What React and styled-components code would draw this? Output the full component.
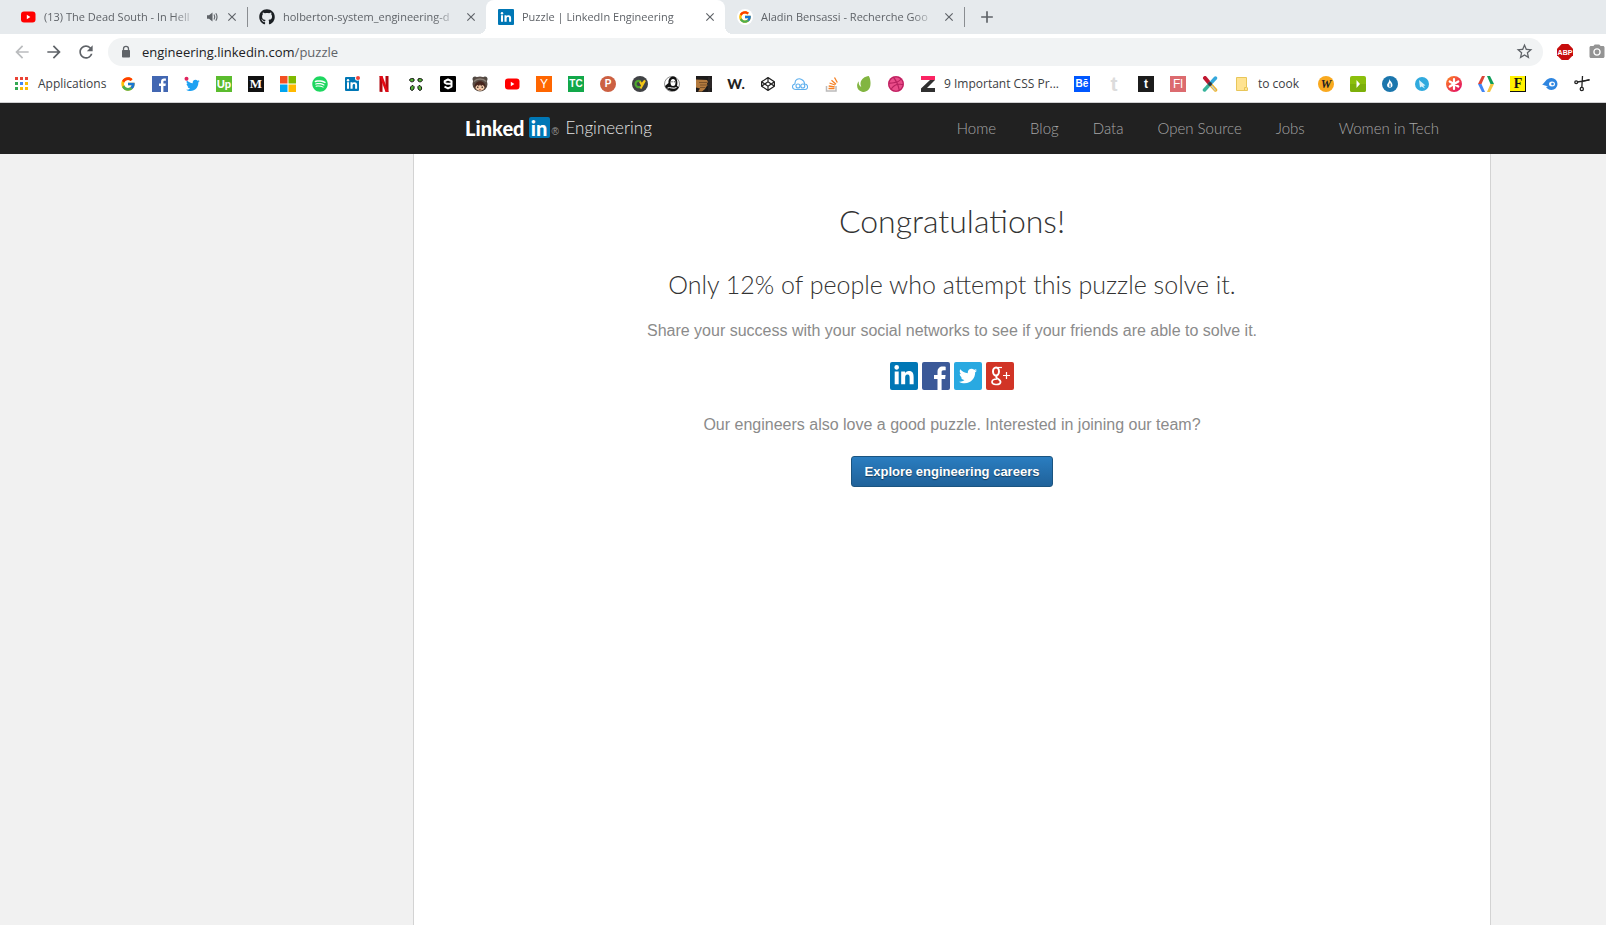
import React from "react";
import styled, { createGlobalStyle, css } from "styled-components";
import { FcGoogle } from "react-icons/fc";
import {
  FaGithub,
  FaSpotify,
  FaDribbble,
  FaCodepen,
  FaTwitter,
  FaLinkedinIn,
} from "react-icons/fa";
import {
  MdArrowBack,
  MdArrowForward,
  MdRefresh,
  MdStarBorder,
  MdCameraAlt,
  MdClose,
  MdAdd,
} from "react-icons/md";

const uiFont = `"Open Sans", "Noto Sans", sans-serif`;
const brandFont = `Lato, "Open Sans", sans-serif`;
const bodyFont = `"Liberation Sans", Arial, sans-serif`;
const serifFont = `"Liberation Serif", serif`;

const GlobalStyle = createGlobalStyle`
  *, *::before, *::after { box-sizing: border-box; }
  body { margin: 0; background: #f1f1f1; font-family: ${bodyFont}; }
  a { color: inherit; text-decoration: none; }
  button { border: 0; padding: 0; background: none; color: inherit; font: inherit; cursor: pointer; }
  svg { display: block; flex: none; }
`;

const Window = styled.div`
  display: flex;
  flex-direction: column;
  min-height: 100vh;
  overflow: hidden;
`;

/* ---------- browser chrome ---------- */

const TabStrip = styled.div`
  display: flex;
  align-items: stretch;
  height: 34px;
  padding-left: 8px;
  background: #e6eaed;
  font: 11px/16px ${uiFont};
  color: #5f6368;
`;

const flare = css`
  content: "";
  position: absolute;
  bottom: 0;
  width: 8px;
  height: 8px;
`;

const Tab = styled.div`
  position: relative;
  display: flex;
  align-items: center;
  flex: 0 1 239px;
  min-width: 0;
  gap: 8px;
  padding: 0 10px 0 12px;
  ${(p) =>
    p.$active &&
    css`
      background: #fff;
      border-radius: 8px 8px 0 0;
      &::before {
        ${flare}
        left: -8px;
        background: radial-gradient(circle at 0 0, transparent 8px, #fff 8px);
      }
      &::after {
        ${flare}
        right: -8px;
        background: radial-gradient(circle at 100% 0, transparent 8px, #fff 8px);
      }
    `}
`;

const TabTitle = styled.span`
  flex: 1;
  min-width: 0;
  overflow: hidden;
  white-space: nowrap;
  mask-image: linear-gradient(to right, #000 calc(100% - 24px), transparent);
`;

const TabClose = styled.button`
  display: flex;
  align-items: center;
  justify-content: center;
  width: 10px;
  height: 16px;
  color: #5f6368;
`;

const TabDivider = styled.span`
  align-self: center;
  width: 1px;
  height: 20px;
  margin-right: -1px;
  background: #8a8d91;
`;

const NewTab = styled.button`
  display: flex;
  align-items: center;
  justify-content: center;
  width: 28px;
  margin-left: 9px;
`;

const Toolbar = styled.div`
  display: flex;
  align-items: center;
  height: 36px;
  padding-left: 12px;
  gap: 12px;
  background: #fff;
  color: #5f6368;
`;

const ToolButton = styled.button`
  display: flex;
  flex: none;
  width: 20px;
  height: 20px;
  color: ${(p) => (p.$muted ? "#babcbe" : "#5f6368")};
`;

const Omnibox = styled.div`
  display: flex;
  align-items: center;
  flex: 1;
  min-width: 0;
  height: 28px;
  padding: 0 8px 0 11px;
  border-radius: 14px;
  background: #f1f3f4;
`;

const Url = styled.div`
  flex: 1;
  min-width: 0;
  margin-left: 9px;
  font: 13px/20px ${uiFont};
  color: #5f6368;
  white-space: nowrap;
  overflow: hidden;
  b {
    font-weight: 400;
    color: #202124;
  }
`;

const Extensions = styled.div`
  display: flex;
  align-items: center;
  flex: none;
  gap: 15px;
  width: 51px;
  padding-left: 2px;
  overflow: hidden;
`;

const BookmarksBar = styled.nav`
  display: flex;
  align-items: center;
  height: 33px;
  padding: 0 0 4px 6px;
  background: #fff;
  border-bottom: 1px solid #d0d0d2;
  overflow: hidden;
`;

const Bookmark = styled.a`
  display: flex;
  align-items: center;
  flex: none;
  gap: 8px;
  width: ${(p) => p.$width || 32}px;
  height: 28px;
  padding: 0 8px;
  font: 12px/16px ${uiFont};
  color: #3c4043;
  white-space: nowrap;
`;

const Badge = styled.span`
  display: flex;
  align-items: center;
  justify-content: center;
  flex: none;
  width: 16px;
  height: 16px;
  border-radius: ${(p) => p.$radius || 0}px;
  background: ${(p) => p.$bg || "transparent"};
  color: ${(p) => p.$fg || "#fff"};
  font: ${(p) => p.$weight || 700} ${(p) => p.$size || 11}px/16px ${(p) => p.$font || bodyFont};
  box-shadow: ${(p) => (p.$edge ? "inset -1px -1px #111" : "none")};
`;

/* ---------- page ---------- */

const columns = css`
  display: grid;
  grid-template-columns: minmax(0, 413fr) minmax(0, 1078px) minmax(0, 115fr);
`;

const SiteHeader = styled.header`
  ${columns}
  height: 51px;
  background: #212121;
`;

const HeaderInner = styled.div`
  grid-column: 2;
  display: flex;
  align-items: center;
  justify-content: space-between;
  padding: 0 52px 2px 52px;
  font-family: ${brandFont};
`;

const Brand = styled.a`
  display: flex;
  align-items: center;
  color: #fff;
  font-size: 20px;
  line-height: 24px;
  font-weight: 900;
`;

const InBox = styled.span`
  display: flex;
  align-items: center;
  justify-content: center;
  width: 21px;
  height: 21px;
  margin-left: 4px;
  border-radius: 2px;
  background: #0077b5;
`;

const Registered = styled.span`
  align-self: flex-end;
  width: 8px;
  margin: 0 6px 0 2px;
  font: 10px/16px ${bodyFont};
  color: #9a9a9a;
`;

const BrandArea = styled.span`
  font-size: 17px;
  font-weight: 300;
  color: #e4e4e4;
`;

const SiteNav = styled.nav`
  display: flex;
  gap: 34px;
  font-size: 15px;
  line-height: 20px;
  font-weight: 300;
  color: #a6a6a6;
  white-space: nowrap;
`;

const PageBody = styled.div`
  ${columns}
  flex: 1;
`;

const Panel = styled.main`
  grid-column: 2;
  display: flex;
  flex-direction: column;
  align-items: center;
  padding: 47px 24px;
  background: #fff;
  border: solid #d3d3d3;
  border-width: 0 1px;
  text-align: center;
`;

const Title = styled.h1`
  margin: 0;
  font: 300 32px/40px ${brandFont};
  color: #333;
`;

const Subtitle = styled.h2`
  margin: 27px 0 0;
  font: 300 25px/32px ${brandFont};
  color: #333;
`;

const Copy = styled.p`
  margin: ${(p) => p.$gap}px 0 0;
  font-size: 16px;
  line-height: 24px;
  color: #8b8b8b;
`;

const ShareRow = styled.div`
  display: flex;
  gap: 4px;
  margin-top: 19px;
`;

const ShareLink = styled.a`
  display: flex;
  align-items: center;
  justify-content: center;
  width: 28px;
  height: 28px;
  border-radius: 2px;
  background: ${(p) => p.$bg};
  color: #fff;
`;

const CareersButton = styled.button`
  height: 31px;
  margin-top: 19px;
  padding: 0 13px;
  border: 1px solid #1b5480;
  border-radius: 3px;
  background: linear-gradient(#2a7dc0, #20629a);
  color: #fff;
  font: 700 13px/29px ${bodyFont};
  text-shadow: 0 1px 1px rgba(0, 0, 0, 0.45);
`;

/* ---------- drawings ---------- */

const Icon = ({ children, size = 16, box = 16 }) => (
  <svg width={size} height={size} viewBox={`0 0 ${box} ${box}`} aria-hidden="true">
    {children}
  </svg>
);

const Lock = () => (
  <Icon size={14} box={14}>
    <path d="M4.500 6V3.800a2.500 2.500 0 0 1 5 0V6" fill="none" stroke="#5f6368" strokeWidth="1.300" />
    <rect x="3" y="5" width="8" height="7.500" rx=".8" fill="#5f6368" />
  </Icon>
);

const Speaker = () => (
  <Icon size={14} box={14}>
    <path d="M2 5.200h2L7.500 2.500v9L4 8.800H2z" fill="#5f6368" />
    <path d="M9 4.500c1 1.500 1 3.500 0 5M10.800 3.300c1.600 2.400 1.600 5 0 7.400" fill="none" stroke="#5f6368" strokeWidth="1.100" />
  </Icon>
);

const YouTube = () => (
  <Icon>
    <rect x="1" y="2.5" width="14.5" height="11" rx="3" fill="#f00" />
    <path d="M6.8 5.8 10.4 8l-3.6 2.2z" fill="#fff" />
  </Icon>
);

const Apps = () => (
  <Icon>
    {["#ea4335", "#ea4335", "#ea4335", "#34a853", "#4285f4", "#fbbc05", "#34a853", "#fbbc05", "#fbbc05"].map((c, i) => (
      <rect key={i} x={1 + (i % 3) * 5} y={1 + Math.floor(i / 3) * 5} width="3" height="3" fill={c} />
    ))}
  </Icon>
);

const LinkedInMark = ({ dot }) => (
  <Icon>
    <rect x={dot ? 1 : 0} y={dot ? 1 : 0} width={dot ? 14 : 16} height={dot ? 14 : 16} rx="1" fill="#0077b5" />
    <path d="M3 6.3h2v6.4H3zM6.500 6.300h2v.9c.4-.6 1-1 2-1 1.900 0 2.600 1.200 2.600 3v3.500h-2V9.500c0-1-.2-1.600-1.100-1.600-1 0-1.400.7-1.400 1.700v3.100H6.500z" fill="#fff" />
    <circle cx="4" cy="4.200" r="1.200" fill="#fff" />
    {dot && <circle cx="13.500" cy="2.200" r="2.500" fill="#fff" />}
    {dot && <circle cx="14" cy="2" r="2" fill="#f04438" />}
  </Icon>
);

const Facebook = () => (
  <Icon>
    <path fill="#4267b2" d="M0 0h16v16H0z" />
    <path d="M9 16V9.900H7V7.500h2V5.700C9 3.600 10.200 2.500 12.100 2.500c.8 0 1.500.1 1.800.1v2.100h-1.300c-1 0-1.200.5-1.200 1.200v1.600h2.400l-.3 2.400h-2.100V16z" fill="#fff" />
  </Icon>
);

const Twitter = () => (
  <Icon>
    <g transform="translate(2 2.500) scale(.0268)">
      <path fill="#1da1f2" d="M459.400 151.700c.3 4.500.3 9.100.3 13.600 0 138.700-105.600 298.600-298.600 298.600-59.500 0-114.700-17.200-161.100-47.100 8.400 1 16.600 1.300 25.300 1.300 49.100 0 94.200-16.600 130.300-44.800-46.100-1-84.800-31.200-98.100-72.800 6.500 1 13 1.600 19.800 1.600 9.400 0 18.800-1.300 27.600-3.600-48.100-9.700-84.100-52-84.100-103v-1.300c14 7.800 30.200 12.700 47.400 13.300-28.300-18.800-46.800-51-46.800-87.400 0-19.500 5.200-37.400 14.300-53 51.700 63.700 129.300 105.300 216.400 109.800-1.600-7.800-2.600-15.900-2.600-24 0-57.800 46.800-104.900 104.900-104.900 30.200 0 57.500 12.700 76.700 33.100 23.700-4.500 46.500-13.300 66.600-25.300-7.800 24.400-24.400 44.800-46.100 57.800 21.100-2.300 41.600-8.100 60.400-16.200-14.300 20.800-32.200 39.300-52.600 54.300z" />
    </g>
    <circle cx="2.500" cy="2.800" r="2" fill="#e0245e" />
  </Icon>
);

const Windows = () => (
  <Icon>
    <path fill="#f25022" d="M0 0h7.500v7.500H0z" />
    <path fill="#7fba00" d="M8.500 0H16v7.500H8.500z" />
    <path fill="#00a4ef" d="M0 8.500h7.500V16H0z" />
    <path fill="#ffb900" d="M8.500 8.500H16V16H8.500z" />
  </Icon>
);

const Netflix = () => (
  <Icon>
    <path fill="#b1060f" d="M3.500 0h3v16l-3-.2zM9.500 0h3v16l-3-.2z" />
    <path fill="#e50914" d="M3.500 0h3l6 16-3-.3z" />
  </Icon>
);

const Clover = () => (
  <Icon>
    <g fill="#54b435" stroke="#111" strokeWidth="1">
      <path d="M1.500 4c0-1.500 3.500-2 4.500-1v2c-1 1-3.500 1.500-4.500-1z" />
      <path d="M14.500 4c0-1.500-3.500-2-4.500-1v2c1 1 3.500 1.500 4.500-1z" />
      <path d="M2.500 13.500c-.5-2 .5-4 2.500-4l1 1c.5 2-.5 3.500-2 4z" />
      <path d="M13.500 13.500c.5-2-.5-4-2.500-4l-1 1c-.5 2 .5 3.500 2 4z" />
    </g>
  </Icon>
);

const NineGag = () => (
  <Icon>
    <rect width="16" height="16" rx="1" fill="#000" />
    <path d="M11.500 7.800H7L4.700 6.600V5.200L8 3.500l3.500 1.700v5.400L8 12.400l-3.500-1.700" fill="none" stroke="#fff" strokeWidth="2" strokeLinejoin="round" />
  </Icon>
);

const AvatarBear = () => (
  <Icon>
    <circle cx="3" cy="3" r="2.500" fill="#504943" />
    <circle cx="13" cy="3" r="2.500" fill="#504943" />
    <circle cx="8" cy="8" r="7.500" fill="#594b43" />
    <path d="M2 5.500C5 2 11 2 14 5.500" stroke="#8b8178" fill="none" strokeWidth="1.500" />
    <ellipse cx="8" cy="11" rx="4.500" ry="3.800" fill="#f0c9a8" />
    <path d="M2.500 12c-1-9 12-9 11 0l-1.500-2-1.500-1L9 10 8 8.500 7 10 5.500 9 4 10z" fill="#47251d" />
    <path d="M5.800 10.500v1.500M10.200 10.500v1.500" stroke="#32211d" strokeWidth="1.200" />
    <path d="M7.200 13.500h1.600" stroke="#ba5f50" />
  </Icon>
);

const CodeHunt = () => (
  <Icon>
    <circle cx="8" cy="8" r="8" fill="#404245" />
    <path d="M8.500 5.300C6 4 3.500 5.500 3.500 8s2.500 4 5 2.700" fill="none" stroke="#4ea72e" strokeWidth="2.200" />
    <path d="M8 5.500l1.500 3L13 4.500l-4.500 8" fill="none" stroke="#f3c515" strokeWidth="2" />
  </Icon>
);

const Portrait = () => (
  <Icon>
    <circle cx="8" cy="8" r="7.500" fill="#fff" stroke="#777" strokeWidth=".8" />
    <path d="M10 .5c-4-.5-6 3-5.500 6.500L1 10c1.500 5 11 8 14 1l-2-1c1-4.500 0-8.500-3-9.500z" fill="#111" />
    <ellipse cx="9" cy="6.500" rx="2.500" ry="3.500" fill="#fff" />
    <path d="M7.500 5.800h1M9.800 5.800h1" stroke="#111" />
    <path d="M3.500 12c2-1.500 6 1.500 9-.5" stroke="#fff" strokeWidth="1" fill="none" />
  </Icon>
);

const Fist = () => (
  <Icon>
    <path d="M0 0h16v16H0z" fill="#1d1b1b" />
    <path d="M0 3.500 11 4l1 2-1 1.500.5 2-1.500 1.500-1 2-3 2.500H2l2-3-4-1z" fill="#b37a3e" />
    <path d="M3 6.500h8M4 9h7M4 11.500h5" stroke="#664222" strokeWidth=".7" />
    <path d="M13 1v15M15 3v9" stroke="#393332" />
  </Icon>
);

const CloudLoop = () => (
  <Icon>
    <g fill="none" stroke="#5fb0ee" strokeWidth="1.100">
      <path d="M4 13.500C-.5 13.500-.5 8.500 3 8 2.500 3 7 1.800 9.500 3.500c2 .8 3 2.500 3 4.500 4 0 4 5.500.5 5.500z" />
      <circle cx="6" cy="10" r="2" />
      <circle cx="10.800" cy="10" r="2" />
    </g>
  </Icon>
);

const StackOverflow = () => (
  <Icon>
    <path d="M2.500 10v5h9.500v-5" fill="none" stroke="#bcbbbb" strokeWidth="1.500" />
    <path d="M4.500 12.500h6M4.700 10l6 .8M5.500 7l5.600 2M7.500 4.200l4.500 4M10.500 1.500l2.800 5" stroke="#f48024" strokeWidth="1.300" />
  </Icon>
);

const Envato = () => (
  <Icon>
    <path d="M12.800 0c-4 .3-8 3-8.300 7.300C4.400 9 5 10.500 5.600 11.300 3.500 10 2.500 8.300 2.700 5.300-.2 9 .8 14.300 6 15.700c4.500 1 7.800-2 8.400-6.400C14.800 6 14.300 2.500 12.800 0z" fill="#82b541" />
  </Icon>
);

const LetterZ = () => (
  <Icon>
    <path d="M1 0h14v4H1z" fill="#fb2463" />
    <path d="M10 4h5L7 12h8v4H1v-3.500z" fill="#303030" />
  </Icon>
);

const CrossTools = () => (
  <Icon>
    <path d="M3 2l5 6" stroke="#c01830" strokeWidth="4" strokeLinecap="round" />
    <path d="M13.500 2 8 8" stroke="#35a8dc" strokeWidth="3.500" strokeLinecap="round" />
    <path d="M2.500 14 8 8" stroke="#38b49c" strokeWidth="3.500" strokeLinecap="round" />
    <path d="M13.500 14 8 8" stroke="#f0b429" strokeWidth="3.500" strokeLinecap="round" />
    <path d="M13.500 14.500 8 8" stroke="#c5cfd2" strokeWidth="1.200" />
    <circle cx="8" cy="8" r="2" fill="#24384b" />
  </Icon>
);

const Folder = () => (
  <Icon>
    <path d="M2.500 1.500h10V11l1 1v2.500h-11z" fill="#ffe391" stroke="#e8c65a" />
    <path d="M10.500 14v-2.500h2" fill="none" stroke="#e8c65a" />
  </Icon>
);

const PlayTile = () => (
  <Icon>
    <rect width="16" height="16" rx="2" fill="#8bbf0c" />
    <path d="M0 8h16v6a2 2 0 0 1-2 2H2a2 2 0 0 1-2-2z" fill="#7caf0a" />
    <path d="M6.500 4 10 8l-3.500 4z" fill="#fff" />
  </Icon>
);

const Drop = () => (
  <Icon>
    <circle cx="8" cy="8" r="8" fill="#1b76ad" />
    <path d="M7.500 3c.3 2 3 3.500 3 6a2.700 2.700 0 0 1-5.400 0c0-1.500 1.900-2 2.400-6z" fill="#fff" />
    <path d="M8 7.500V11" stroke="#1b76ad" strokeWidth="1.200" />
  </Icon>
);

const Pointer = () => (
  <Icon>
    <circle cx="8" cy="8" r="7" fill="#30aade" />
    <path d="M5 4l6.500 5.500-2.300.2L11 12.500 7.500 10.500 6 11.500z" fill="#d9f2fb" />
  </Icon>
);

const Asterisk = () => (
  <Icon>
    <defs>
      <linearGradient id="warm" x1="0" y1="0" x2="1" y2="1">
        <stop offset="0" stopColor="#ff8a1e" />
        <stop offset="1" stopColor="#e0006e" />
      </linearGradient>
    </defs>
    <circle cx="8" cy="8" r="8" fill="url(#warm)" />
    <path d="M8 3v10M3.700 5.500l8.600 5M12.300 5.500l-8.600 5" stroke="#fff" strokeWidth="2.200" strokeLinecap="round" />
  </Icon>
);

const Developers = () => (
  <Icon>
    <path d="M4 0h3L3.500 8H0z" fill="#db4437" />
    <path d="M0 8h3.500L7 16H4z" fill="#4285f4" />
    <path d="M9 0h3l4 8h-3.500z" fill="#0f9d58" />
    <path d="M12.500 8H16l-4 8H9z" fill="#f4c542" />
  </Icon>
);

const Comet = () => (
  <Icon>
    <path d="M0 8.500C3 7.500 3.500 2 9.500 2a6 6 0 0 1 0 12c-3 0-4.500-1.500-5.500-3l2-.5C4 9.500 2 9.300 0 8.500z" fill="#2f86e0" />
    <ellipse cx="10" cy="8" rx="3" ry="2.500" fill="#fff" />
    <circle cx="10.500" cy="8" r="1.300" fill="#2f86e0" />
  </Icon>
);

const Scissors = () => (
  <Icon>
    <g fill="none" stroke="#222" strokeWidth="1.300">
      <path d="M15.500 3.800 3.500 6M8.500 0 7.800 12" />
      <circle cx="2.200" cy="6.200" r="1.400" />
      <circle cx="7.800" cy="13" r="1.600" />
    </g>
    <path d="M8 5l7.500-2v1.500L8 6z" fill="#222" />
  </Icon>
);

const AdBlock = () => (
  <Icon>
    <path d="M4.700 0h6.600L16 4.700v6.600L11.300 16H4.700L0 11.300V4.700z" fill="#c70d0d" />
    <text x="8" y="11" textAnchor="middle" fontFamily="Liberation Sans, sans-serif" fontWeight="700" fontSize="7" fill="#fff">ABP</text>
  </Icon>
);

const bookmarks = [
  { name: "Google", icon: <FcGoogle size={16} /> },
  { name: "Facebook", icon: <Facebook /> },
  { name: "Twitter", icon: <Twitter /> },
  { name: "Upwork", icon: <Badge $bg="#5bbc2e" $size={11} $font={brandFont} $weight={900}>Up</Badge> },
  { name: "Medium", icon: <Badge $bg="#111" $size={13} $font={serifFont}>M</Badge> },
  { name: "Microsoft", icon: <Windows /> },
  { name: "Spotify", icon: <FaSpotify size={16} color="#1ed760" /> },
  { name: "LinkedIn", icon: <LinkedInMark dot /> },
  { name: "Netflix", icon: <Netflix /> },
  { name: "Clover", icon: <Clover /> },
  { name: "9GAG", icon: <NineGag /> },
  { name: "Avatar", icon: <AvatarBear /> },
  { name: "YouTube", icon: <YouTube /> },
  { name: "Hacker News", icon: <Badge $bg="#f60" $size={12} $weight={400}>Y</Badge> },
  { name: "TechCrunch", icon: <Badge $bg="#12a84a" $size={10}>TC</Badge> },
  { name: "Product Hunt", icon: <Badge $bg="#cc6042" $radius={8} $size={10}>P</Badge> },
  { name: "Code", icon: <CodeHunt /> },
  { name: "Portrait", icon: <Portrait /> },
  { name: "Fist", icon: <Fist /> },
  { name: "Awwwards", icon: <Badge $fg="#222" $size={14} $font={brandFont} $weight={900}>W.</Badge> },
  { name: "CodePen", icon: <Badge><FaCodepen size={14} color="#222" /></Badge> },
  { name: "Cloud", icon: <CloudLoop /> },
  { name: "Stack Overflow", icon: <StackOverflow /> },
  { name: "Envato", icon: <Envato /> },
  { name: "Dribbble", icon: <Badge $bg="#ea4c89" $radius={8}><FaDribbble size={16} color="#b8215f" /></Badge> },
  { name: "CSS", icon: <LetterZ />, label: "9 Important CSS Pr...", width: 154 },
  { name: "Behance", icon: <Badge $bg="#0057ff" $size={10}>Bē</Badge> },
  { name: "Tumblr", icon: <Badge $fg="#dcdcdc" $size={21}>t</Badge> },
  { name: "Treehouse", icon: <Badge $bg="#1c1c1c" $size={12}>t</Badge> },
  { name: "Flat", icon: <Badge $bg="#dc6b6f" $size={12} $weight={400}>Fl</Badge> },
  { name: "Tools", icon: <CrossTools /> },
  { name: "Recipes", icon: <Folder />, label: "to cook", width: 84 },
  { name: "W", icon: <Badge $bg="#f9a91f" $fg="#222" $radius={8} $size={12} $font={serifFont}><i>W</i></Badge> },
  { name: "Play", icon: <PlayTile /> },
  { name: "Drop", icon: <Drop /> },
  { name: "Pointer", icon: <Pointer /> },
  { name: "Asterisk", icon: <Asterisk /> },
  { name: "Developers", icon: <Developers /> },
  { name: "F", icon: <Badge $bg="#fff200" $fg="#111" $size={14} $font={serifFont} $edge>F</Badge> },
  { name: "Comet", icon: <Comet /> },
  { name: "Scissors", icon: <Scissors /> },
];

const tabs = [
  { icon: <YouTube />, title: "(13) The Dead South - In Hell", audio: true, divider: true },
  { icon: <FaGithub size={16} color="#1b1f23" />, title: "holberton-system_engineering-d" },
  { icon: <LinkedInMark />, title: "Puzzle | LinkedIn Engineering", active: true },
  { icon: <Badge $bg="#fff" $radius={8}><FcGoogle size={14} /></Badge>, title: "Aladin Bensassi - Recherche Goo", divider: true },
];

const navLinks = ["Home", "Blog", "Data", "Open Source", "Jobs", "Women in Tech"];

export default function App() {
  return (
    <Window>
      <GlobalStyle />
      <TabStrip>
        {tabs.map((tab) => (
          <React.Fragment key={tab.title}>
            <Tab $active={tab.active}>
              {tab.icon}
              <TabTitle>{tab.title}</TabTitle>
              {tab.audio && <Speaker />}
              <TabClose aria-label="Close tab"><MdClose size={14} /></TabClose>
            </Tab>
            {tab.divider && <TabDivider />}
          </React.Fragment>
        ))}
        <NewTab aria-label="New tab"><MdAdd size={20} /></NewTab>
      </TabStrip>

      <Toolbar>
        <ToolButton $muted aria-label="Back"><MdArrowBack size={20} /></ToolButton>
        <ToolButton aria-label="Forward"><MdArrowForward size={20} /></ToolButton>
        <ToolButton aria-label="Reload"><MdRefresh size={20} /></ToolButton>
        <Omnibox>
          <Lock />
          <Url><b>engineering.linkedin.com</b>/puzzle</Url>
          <ToolButton aria-label="Bookmark this page"><MdStarBorder size={19} /></ToolButton>
        </Omnibox>
        <Extensions>
          <AdBlock />
          <MdCameraAlt size={18} color="#949494" />
        </Extensions>
      </Toolbar>

      <BookmarksBar aria-label="Bookmarks">
        <Bookmark href="#apps" $width={106}><Apps />Applications</Bookmark>
        {bookmarks.map((b) => (
          <Bookmark key={b.name} href="#bookmark" aria-label={b.name} $width={b.width}>
            {b.icon}
            {b.label}
          </Bookmark>
        ))}
      </BookmarksBar>

      <SiteHeader>
        <HeaderInner>
          <Brand href="#home">
            Linked<InBox>in</InBox>
            <Registered>®</Registered>
            <BrandArea>Engineering</BrandArea>
          </Brand>
          <SiteNav>
            {navLinks.map((label) => (
              <a key={label} href="#nav">{label}</a>
            ))}
          </SiteNav>
        </HeaderInner>
      </SiteHeader>

      <PageBody>
        <Panel>
          <Title>Congratulations!</Title>
          <Subtitle>Only 12% of people who attempt this puzzle solve it.</Subtitle>
          <Copy $gap={19}>Share your success with your social networks to see if your friends are able to solve it.</Copy>
          <ShareRow>
            <ShareLink href="#linkedin" aria-label="Share on LinkedIn" $bg="#0077b5"><FaLinkedinIn size={22} /></ShareLink>
            <ShareLink href="#facebook" aria-label="Share on Facebook" $bg="#3b5998">
              <Icon size={28} box={28}>
                <path d="M15.500 28V17H12v-4h3.500v-3c0-3.600 2-5.500 5.200-5.500 1.500 0 2.600.1 3 .2V8.300h-2.100c-1.600 0-2 .8-2 2V13h4l-.5 4h-3.500v11z" fill="#fff" />
              </Icon>
            </ShareLink>
            <ShareLink href="#twitter" aria-label="Share on Twitter" $bg="#29a9e1"><FaTwitter size={18} /></ShareLink>
            <ShareLink href="#googleplus" aria-label="Share on Google Plus" $bg="#d13426">
              <Icon size={28} box={28}>
                <g fill="none" stroke="#fff">
                  <ellipse cx="10" cy="9.500" rx="3" ry="4" strokeWidth="2" />
                  <path d="M10 5.500h6" strokeWidth="1.200" />
                  <path d="M11 13.500c-1.500 1.200-1 2 .5 3 2.500 1.500 3.500 2.500 3 4-1 3-8.500 2.500-8.500-.5 0-2 2.500-3 5-3" strokeWidth="1.700" />
                  <path d="M17 13.500h7M20.500 10v7" strokeWidth="1.200" />
                </g>
              </Icon>
            </ShareLink>
          </ShareRow>
          <Copy $gap={23}>Our engineers also love a good puzzle. Interested in joining our team?</Copy>
          <CareersButton type="button">Explore engineering careers</CareersButton>
        </Panel>
      </PageBody>
    </Window>
  );
}
